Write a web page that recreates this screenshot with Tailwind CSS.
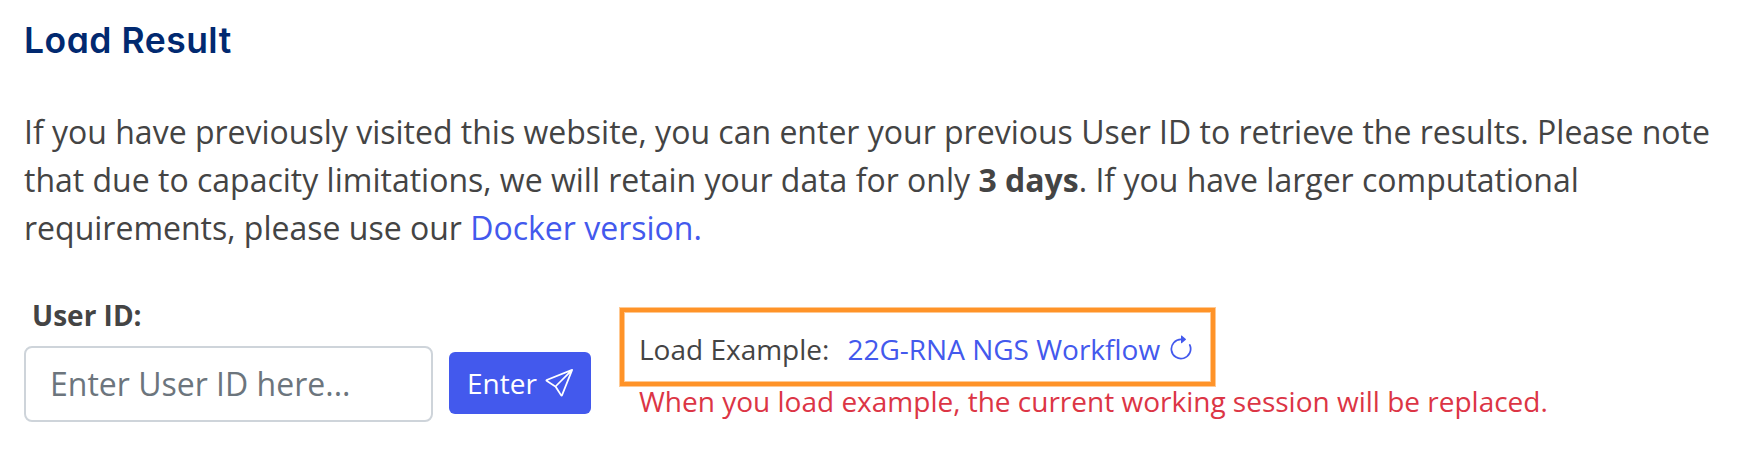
<!DOCTYPE html>
<html lang="en">
<head>
<meta charset="utf-8">
<title>Load Result</title>
<script src="https://cdn.jsdelivr.net/npm/@tailwindcss/browser@4"></script>
</head>
<body class="bg-white text-[#444444] font-['Open_Sans',sans-serif] overflow-hidden">
<main class="w-[1742px] h-[450px] px-6 pt-[19px]">
  <h1 class="h-[89px] text-[35.5px] leading-[44px] tracking-[0.5px] font-semibold text-[#012970] font-['Inter',sans-serif] [font-feature-settings:'cv11'] whitespace-nowrap">Load Result</h1>
  <p class="text-[32px] leading-[48px] whitespace-nowrap">If you have previously visited this website, you can enter your previous User ID to retrieve the results. Please note<br>that due to capacity limitations, we will retain your data for only <b class="font-bold">3 days</b>. If you have larger computational<br>requirements, please use our <a class="text-[#4359ed]">Docker version.</a></p>
  <div class="flex pt-[42px]">
    <div class="w-[409px]">
      <label class="block h-[52px] pl-2 text-[28px] leading-[42px] font-bold">User ID:</label>
      <input type="text" placeholder="Enter User ID here..." class="block w-full h-[76px] rounded-lg border-2 border-[#ced4da] px-6 pb-[2px] text-[32px] placeholder:text-[#6c757d]">
    </div>
    <button class="flex items-center gap-2 ml-4 mt-[58px] w-[142px] h-[62px] rounded-[6px] bg-[#4359ed] text-white text-[28px] leading-[42px] pl-[18px] whitespace-nowrap">Enter
      <svg class="size-7 shrink-0" viewBox="0 0 16 16" fill="currentColor"><path d="M15.854.146a.5.5 0 0 1 .11.54l-5.819 14.547a.75.75 0 0 1-1.329.124l-3.178-4.995L.643 7.184a.75.75 0 0 1 .124-1.33L15.314.037a.5.5 0 0 1 .54.11ZM6.636 10.07l2.761 4.338L14.13 2.576 6.636 10.07Zm6.787-8.201L1.591 6.602l4.339 2.76 7.494-7.493Z"/></svg>
    </button>
    <div class="ml-[29px] mt-[14px] text-[28px] whitespace-nowrap">
      <div class="flex items-center w-[595px] h-[78px] border-4 border-[#ff9328] shadow-[0_0_0_1px_#ff932880,inset_0_0_0_1px_#ff932880] pl-[15px] pt-[3px] leading-[42px]">
        <span>Load Example:</span>
        <a class="flex items-center gap-[7px] ml-[18px] text-[#4359ed]">22G-RNA NGS Workflow
          <svg class="size-7" viewBox="0 0 16 16" fill="currentColor"><path d="M8 3a5 5 0 1 0 4.546 2.914.5.5 0 0 1 .908-.417A6 6 0 1 1 8 2v1z"/><path d="M8 4.466V.534a.25.25 0 0 1 .41-.192l2.36 1.966c.12.1.12.284 0 .384L8.41 4.658A.25.25 0 0 1 8 4.466z"/></svg>
        </a>
      </div>
      <p class="pl-[19px] leading-[30px] text-[#dc3545]">When you load example, the current working session will be replaced.</p>
    </div>
  </div>
</main>
</body>
</html>
